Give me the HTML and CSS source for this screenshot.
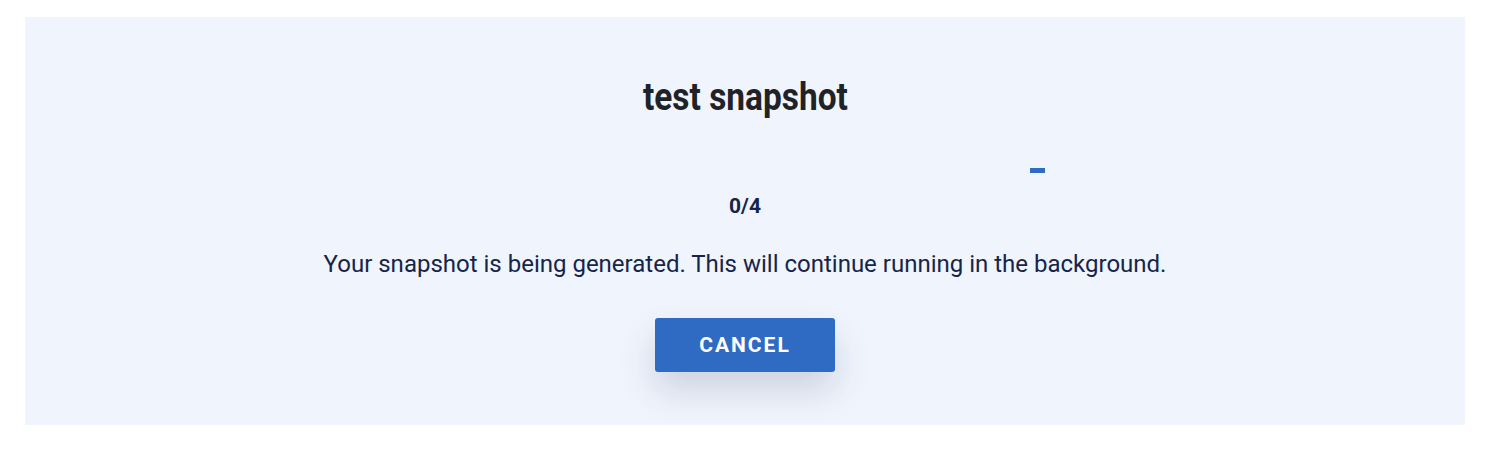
FILE: index.html
```html
<!DOCTYPE html>
<html>
<head>
<meta charset="utf-8">
<link rel="stylesheet" href="styles.css">
</head>
<body>
<div class="page">
  <section class="panel">
    <h1 class="title">test snapshot</h1>
    <div class="progress"><div class="progress-bar"></div></div>
    <div class="count">0/4</div>
    <p class="message">Your snapshot is being generated. This will continue running in the background.</p>
    <button class="cancel">CANCEL</button>
  </section>
</div>
</body>
</html>
```
FILE: styles.css
```css
html, body {
  margin: 0;
  padding: 0;
  background: #ffffff;
}
.page {
  padding: 17px 26px 25px 25px;
  font-family: Roboto, "Liberation Sans", sans-serif;
}
.panel {
  background: #f0f5fd;
  height: 408px;
  box-sizing: border-box;
  display: flex;
  flex-direction: column;
  align-items: center;
  padding-top: 58px;
}
.title {
  margin: 0;
  font-size: 38px;
  line-height: 44px;
  font-weight: 700;
  color: #1f2227;
  transform: scaleX(0.88);
}
.progress {
  width: 600px;
  height: 5px;
  margin-top: 49px;
  display: flex;
  justify-content: flex-end;
}
.progress-bar {
  width: 15px;
  height: 5px;
  background: #2f6bc2;
}
.count {
  margin-top: 20px;
  font-size: 21px;
  line-height: 26px;
  font-weight: 700;
  color: #16244a;
}
.message {
  margin: 29px 0 0;
  font-size: 24px;
  line-height: 32px;
  color: #16244a;
}
.cancel {
  margin-top: 38px;
  width: 180px;
  height: 54px;
  border: none;
  border-radius: 3px;
  background: #2f6bc2;
  color: #ffffff;
  font-family: Roboto, "Liberation Sans", sans-serif;
  font-size: 21px;
  font-weight: 700;
  letter-spacing: 2px;
  box-shadow: 0 18px 36px rgba(20, 30, 60, 0.16);
  cursor: pointer;
}
```
